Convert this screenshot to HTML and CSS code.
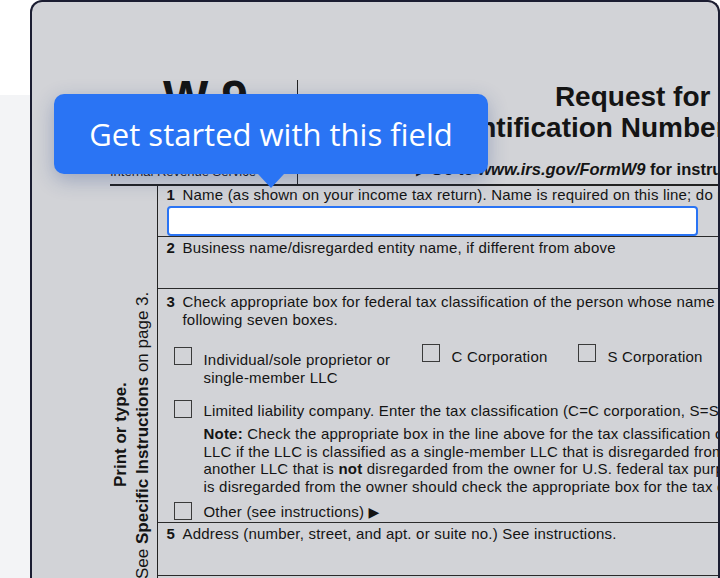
FILE: index.html
```html
<!DOCTYPE html>
<html lang="en">
<head>
<meta charset="utf-8">
<title>W-9</title>
<link rel="stylesheet" href="styles.css">
</head>
<body>
<div class="page">
  <div class="frame">
    <div class="form">
      <div class="head">
        <div class="head-left">
          <div class="formno"><span class="form-word">Form</span><span class="w9">W-9</span></div>
          <div class="rev">(Rev. October 2018)<br>Department of the Treasury</div>
          <div class="irs">Internal Revenue Service</div>
        </div>
        <div class="head-center">
          <div class="title">Request for Taxpayer</div>
          <div class="title">Identification Number and Certification</div>
          <div class="goto"><span class="arrow">▶</span> Go to <i>www.irs.gov/FormW9</i> for instructions and the latest information.</div>
        </div>
      </div>
      <div class="body">
        <div class="side">
          <div class="side-text">
            <div class="side-b">Print or type.</div>
            <div>See <b>Specific Instructions</b> on page 3.</div>
          </div>
        </div>
        <div class="main">
          <div class="row r1">
            <div class="lbl"><b class="n">1</b>Name (as shown on your income tax return). Name is required on this line; do not leave this line blank.</div>
            <div class="input"></div>
          </div>
          <div class="row r2">
            <div class="lbl"><b class="n">2</b>Business name/disregarded entity name, if different from above</div>
          </div>
          <div class="row r3">
            <div class="lbl"><b class="n">3</b>Check appropriate box for federal tax classification of the person whose name is entered on line 1. Check only one of the</div>
            <div class="lbl indent">following seven boxes.</div>
            <div class="opts">
              <div class="opt o-ind"><span class="box"></span><span class="opt-t t4">Individual/sole proprietor or<br>single-member LLC</span></div>
              <div class="opt o-c"><span class="box"></span><span class="opt-t t4">C Corporation</span></div>
              <div class="opt o-s"><span class="box"></span><span class="opt-t t4">S Corporation</span></div>
              <div class="opt o-p"><span class="box"></span><span class="opt-t t4">Partnership</span></div>
            </div>
            <div class="opt o-llc"><span class="box"></span><span class="opt-t t2">Limited liability company. Enter the tax classification (C=C corporation, S=S corporation, P=Partnership) ▶</span></div>
            <div class="note">
              <div><b>Note:</b> Check the appropriate box in the line above for the tax classification of the single-member owner. Do not check</div>
              <div>LLC if the LLC is classified as a single-member LLC that is disregarded from the owner unless the owner of the LLC is</div>
              <div>another LLC that is <b>not</b> disregarded from the owner for U.S. federal tax purposes. Otherwise, a single-member LLC that</div>
              <div>is disregarded from the owner should check the appropriate box for the tax classification of its owner.</div>
            </div>
            <div class="opt o-other"><span class="box"></span><span class="opt-t t1">Other (see instructions) <span class="tri">▶</span></span></div>
          </div>
          <div class="row r5">
            <div class="lbl"><b class="n">5</b>Address (number, street, and apt. or suite no.) See instructions.</div>
          </div>
        </div>
      </div>
    </div>
  </div>
  <div class="tip">Get started with this field</div>
</div>
</body>
</html>
```

FILE: styles.css
```css
html, body {
  margin: 0;
  padding: 0;
}
body {
  width: 720px;
  height: 578px;
  overflow: hidden;
  background: linear-gradient(to bottom, #ffffff 0, #ffffff 95px, #f3f4f6 95px, #f3f4f6 100%);
}
.page {
  position: relative;
  width: 720px;
  height: 578px;
}
.frame {
  margin-left: 30px;
  width: 690px;
  height: 578px;
  box-sizing: border-box;
  border: 2px solid #1b1d31;
  border-bottom: none;
  border-radius: 12px 12px 0 0;
  background: #d2d3d7;
  overflow: hidden;
}
.form {
  padding-left: 78px;
  font-family: "Liberation Sans", Arial, sans-serif;
  color: #141414;
}

/* header */
.head {
  display: flex;
  height: 104px;
  padding-top: 78px;
  border-bottom: 2px solid #222;
}
.head-left {
  width: 187px;
  flex-shrink: 0;
  border-right: 1.5px solid #222;
  display: flex;
  flex-direction: column;
  justify-content: space-between;
}
.formno {
  margin-top: -6px;
  height: 48px;
  white-space: nowrap;
}
.form-word {
  display: inline-block;
  width: 53px;
  font-size: 10px;
}
.w9 {
  font-size: 48px;
  line-height: 48px;
  font-weight: bold;
  letter-spacing: -1px;
}
.rev {
  font-size: 10px;
  line-height: 12px;
}
.irs {
  font-size: 13px;
  line-height: 16px;
  padding-bottom: 4px;
  white-space: nowrap;
}
.head-center {
  flex: 1;
  min-width: 0;
  display: flex;
  flex-direction: column;
}
.title {
  width: 600px;
  margin-left: 99px;
  text-align: center;
  font-size: 28px;
  line-height: 31px;
  font-weight: bold;
  white-space: nowrap;
  flex-shrink: 0;
}
.title:first-child {
  margin-top: 1px;
}
.goto {
  margin-top: auto;
  margin-left: 118px;
  padding-bottom: 3px;
  font-size: 16.5px;
  line-height: 20px;
  font-weight: bold;
  white-space: nowrap;
}
.arrow {
  font-family: "DejaVu Sans", sans-serif;
  font-size: 13px;
}

/* body */
.body {
  display: flex;
  height: 392px;
}
.side {
  width: 47px;
  flex-shrink: 0;
  border-right: 1.5px solid #222;
  display: flex;
}
.side-text {
  writing-mode: vertical-rl;
  transform: rotate(180deg);
  height: 498px;
  text-align: center;
  font-size: 17px;
  line-height: 22px;
  white-space: nowrap;
}
.side-b {
  font-weight: bold;
}
.main {
  flex: 1;
  min-width: 0;
}
.row {
  border-bottom: 1.5px solid #2a2a2a;
  padding-left: 8.5px;
  white-space: nowrap;
  overflow: hidden;
}
.lbl {
  font-size: 15px;
  line-height: 18px;
  letter-spacing: 0.2px;
}
.n {
  display: inline-block;
  width: 16px;
  letter-spacing: 0;
}
.indent {
  padding-left: 16px;
  line-height: 17.5px;
}
.r1 {
  height: 50px;
}
.input {
  margin-top: 2px;
  width: 531px;
  height: 30px;
  box-sizing: border-box;
  background: #ffffff;
  border: 2.5px solid #2a74f4;
  border-radius: 4px;
}
.r2 {
  padding-top: 1.5px;
  height: 49px;
}
.r3 {
  padding-top: 4.5px;
  height: 229px;
}
.r3 > .lbl:first-child {
  line-height: 17.5px;
}
.opts {
  display: flex;
  align-items: flex-start;
  margin-top: 17px;
}
.opt {
  display: flex;
  align-items: flex-start;
  flex-shrink: 0;
  margin-left: 7px;
  font-size: 15px;
  line-height: 17.5px;
  letter-spacing: 0.2px;
}
.box {
  width: 18px;
  height: 18px;
  box-sizing: border-box;
  border: 1.5px solid #3a3a3a;
  flex-shrink: 0;
  margin-right: 12px;
}
.t4 { padding-top: 4px; }
.t2 { padding-top: 2px; }
.t1 { padding-top: 1px; }
.opts .opt { margin-left: 0; }
.o-ind { width: 248px; margin-top: 2px; padding-left: 7px; }
.o-c { width: 156px; margin-top: -1px; }
.o-s { width: 150px; margin-top: -1px; }
.o-p { margin-top: -1px; }
.o-llc { margin-top: 14px; }
.note {
  margin-top: 5.5px;
  padding-left: 37px;
  font-size: 15px;
  line-height: 17.5px;
  letter-spacing: 0.2px;
}
.o-other { margin-top: 7px; }
.tri {
  font-family: "DejaVu Sans", sans-serif;
  font-size: 14px;
}
.r5 {
  padding-top: 1.5px;
  height: 50px;
}

/* tooltip */
.tip {
  position: absolute;
  left: 54px;
  top: 94px;
  width: 434px;
  height: 80px;
  box-sizing: border-box;
  background: #2a74f4;
  border-radius: 10px;
  box-shadow: 0 6px 20px rgba(30, 60, 130, 0.3);
  color: #ffffff;
  font-family: "Open Sans", sans-serif;
  font-size: 31px;
  line-height: 80px;
  text-align: center;
  white-space: nowrap;
}
.tip::after {
  content: "";
  position: absolute;
  left: 204px;
  bottom: -14px;
  border-left: 13px solid transparent;
  border-right: 13px solid transparent;
  border-top: 14px solid #2a74f4;
}
```
